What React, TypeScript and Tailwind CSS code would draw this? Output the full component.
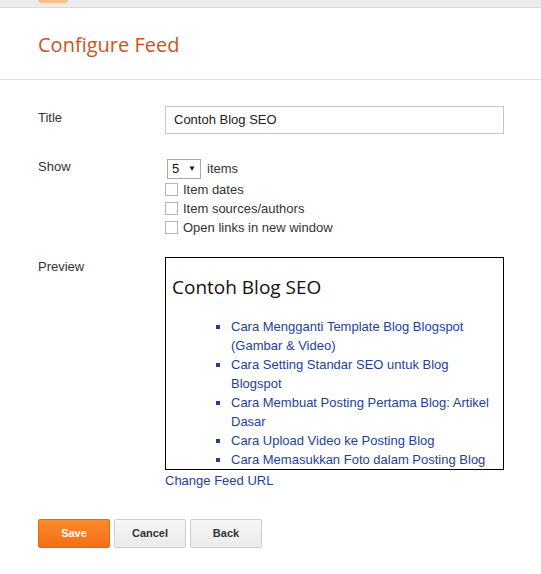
import React from 'react';

const posts = [
  'Cara Mengganti Template Blog Blogspot (Gambar & Video)',
  'Cara Setting Standar SEO untuk Blog Blogspot',
  'Cara Membuat Posting Pertama Blog: Artikel Dasar',
  'Cara Upload Video ke Posting Blog',
  'Cara Memasukkan Foto dalam Posting Blog',
];

const options = ['Item dates', 'Item sources/authors', 'Open links in new window'];

const Checkbox: React.FC<{ label: string }> = ({ label }) => (
  <label className="flex items-center h-[19px] gap-[5px]">
    <span className="w-[13px] h-[13px] border border-[#b5b5b5] bg-white" />
    <span>{label}</span>
  </label>
);

const App: React.FC = () => {
  return (
    <div className="w-[541px] h-[574px] bg-white overflow-hidden text-[13px] text-[#333] font-['Liberation_Sans',Arial,sans-serif]">
      <div className="h-[8px] bg-[#ebebeb] border-b border-[#dcdcdc] pl-[38px]">
        <div className="w-[30px] h-[3px] bg-[#f9c08a] rounded-b-md" />
      </div>

      <div className="h-[72px] border-b border-[#e0e0e0] flex items-center pl-[38px]">
        <h1 className="text-[20px] text-[#d0531c] font-['Open_Sans',sans-serif] pt-[2px]">Configure Feed</h1>
      </div>

      <div className="pl-[38px] pt-[26px]">
        <div className="flex">
          <div className="w-[127px] pt-[2px]">Title</div>
          <div className="w-[339px] h-[28px] border border-[#c8c8c8] flex items-center px-[8px] text-[#222]">
            Contoh Blog SEO
          </div>
        </div>

        <div className="flex mt-[25px]">
          <div className="w-[127px] leading-[15px]">Show</div>
          <div className="flex flex-col">
            <div className="flex items-center gap-[6px] h-[20px] pl-[2px]">
              <div className="w-[34px] h-[20px] border border-[#a9a9a9] flex items-center justify-between px-[4px] text-[#111]">
                <span>5</span>
                <span className="text-[8px]">▼</span>
              </div>
              <span>items</span>
            </div>
            <div className="pt-[1px]">
              {options.map((o) => (
                <Checkbox key={o} label={o} />
              ))}
            </div>
          </div>
        </div>

        <div className="flex mt-[20px]">
          <div className="w-[127px]">Preview</div>
          <div>
            <div className="w-[339px] h-[213px] border border-black overflow-hidden">
              <h2 className="font-['Open_Sans',sans-serif] text-[19px] text-[#111] pl-[6px] pt-[15px] leading-[28px]">
                Contoh Blog SEO
              </h2>
              <ul className="list-[square] pl-[65px] pr-[6px] mt-[16px] leading-[19px] text-[#1e3f9a]">
                {posts.map((p) => (
                  <li key={p}>
                    <a href="#">{p}</a>
                  </li>
                ))}
              </ul>
            </div>
            <a href="#" className="block leading-[19px] text-[#1e3f9a] mt-[1px]">Change Feed URL</a>
          </div>
        </div>

        <div className="flex gap-[4px] mt-[29px]">
          <button className="w-[72px] h-[29px] rounded-[2px] border border-[#e8660f] bg-gradient-to-b from-[#fb8a2c] to-[#f46d14] text-white text-[11px] font-bold">
            Save
          </button>
          <button className="w-[72px] h-[29px] rounded-[2px] border border-[#cfcfcf] bg-gradient-to-b from-[#f6f6f6] to-[#ebebeb] text-[#333] text-[11px] font-bold">
            Cancel
          </button>
          <button className="w-[72px] h-[29px] rounded-[2px] border border-[#cfcfcf] bg-gradient-to-b from-[#f6f6f6] to-[#ebebeb] text-[#333] text-[11px] font-bold">
            Back
          </button>
        </div>
      </div>
    </div>
  );
};

export default App;
